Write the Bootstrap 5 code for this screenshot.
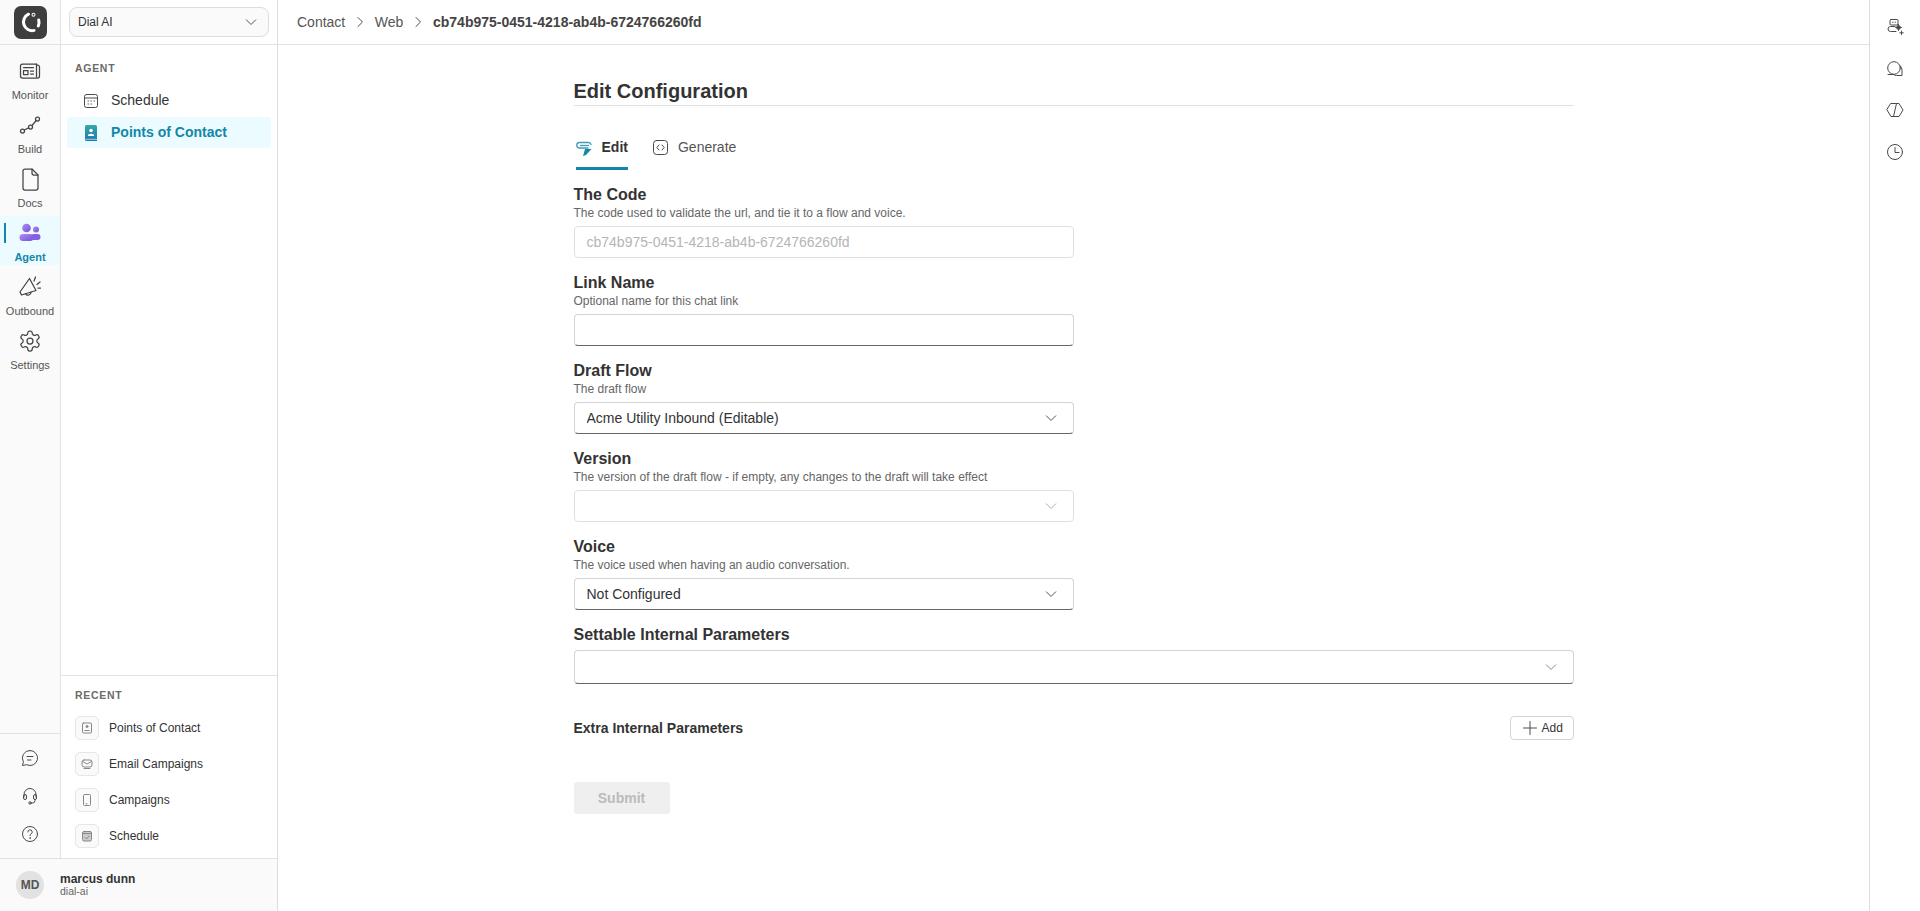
<!DOCTYPE html>
<html lang="en">
<head>
    <meta charset="UTF-8">
    <title>Edit Configuration</title>
    <link href="https://cdn.jsdelivr.net/npm/bootstrap@5.3.3/dist/css/bootstrap.min.css" rel="stylesheet">
    <style>
        body { font-family: "Liberation Sans", Arial, sans-serif; color: #333; background: #fff; height: 911px; overflow: hidden; }
        svg { display: block; flex: none; }
        .ico { fill: none; stroke: #444; stroke-width: 1.25; stroke-linecap: round; stroke-linejoin: round; }
        .ico.thin { stroke-width: 1; stroke: #4a4a4a; }

        .side-shell { width: 278px; border-right: 1px solid #ddd; flex: none; }
        .rail { width: 61px; background: #fafafa; border-right: 1px solid #e2e2e2; flex: none; }
        .logo-cell { height: 45px; border-bottom: 1px solid #e2e2e2; padding: 6px 0 0 14px; }
        .logo-box { width: 33px; height: 33px; background: #3e3e3e; border-radius: 7px; }
        .rail-nav { padding: 9px 0 0; gap: 5px; }
        .rail-item { height: 49px; padding-top: 5px; position: relative; font-size: 11px; line-height: 14px; color: #555; }
        .rail-item .rail-label { margin-top: 5px; }
        .rail-item.on { background: #ecfbff; color: #1287a8; font-weight: 700; }
        .rail-item.on::before { content: ""; position: absolute; left: 4px; top: 7px; width: 2px; height: 20px; background: #1287a8; }
        .rail-help { border-top: 1px solid #e2e2e2; height: 125px; padding-top: 14px; gap: 18px; }

        .panel-top { height: 45px; border-bottom: 1px solid #e2e2e2; padding: 7px 8px 0; }
        .form-select { background-image: url("data:image/svg+xml,%3Csvg xmlns='http://www.w3.org/2000/svg' viewBox='0 0 12 12'%3E%3Cpath d='M1 3.5l5 5 5-5' fill='none' stroke='%23555' stroke-width='1'/%3E%3C/svg%3E"); background-size: 12px 12px; background-position: right 11px center; }
        .org-select { height: 30px; font-size: 12px; line-height: 16px; padding: 6px 24px 6px 8px; background-color: #fafafa; border-color: #ddd; border-radius: 8px; color: #333; }
        .panel-head { font-size: 10.5px; line-height: 14px; font-weight: 700; letter-spacing: .7px; color: #6b6b6b; padding-left: 14px; }
        .panel-head.gap-below { margin-bottom: 10px; }
        .panel-nav { padding: 16px 0 0 0; }
        .panel-link { height: 31px; margin: 0 6px 1px; padding-left: 16px; gap: 12px; font-size: 14px; color: #333; border-radius: 3px; }
        .panel-link.on { background: #ecfbff; color: #1287a8; font-weight: 700; }
        .recent-box { border-top: 1px solid #e2e2e2; padding: 12px 0 10px; }
        .recent-list { margin-top: 14px; gap: 12px; padding-left: 14px; }
        .recent-row { height: 24px; gap: 10px; font-size: 12px; color: #333; }
        .recent-ico { width: 24px; height: 24px; border: 1px solid #e6e6e6; border-radius: 5px; background: #fafafa; }
        .recent-ico .ico { stroke: #888; stroke-width: 1; }

        .user-bar { height: 53px; background: #fafafa; border-top: 1px solid #e2e2e2; padding-left: 16px; gap: 16px; }
        .user-pic { width: 28px; height: 28px; border-radius: 50%; background: #e2e2e2; color: #555; font-size: 12px; font-weight: 700; }
        .user-name { font-size: 12px; line-height: 13px; font-weight: 700; color: #333; }
        .user-org { font-size: 10.5px; line-height: 11px; color: #666; }

        .crumb-bar { height: 45px; border-bottom: 1px solid #e2e2e2; padding-left: 19px; font-size: 14px; color: #555; gap: 7.8px; }
        .crumb-bar b { color: #444; }
        .form-wrap { width: 1000px; margin: 34px auto 0; }
        .page-title { font-size: 20px; line-height: 24px; font-weight: 700; color: #333; padding-bottom: 2px; border-bottom: 1px solid #e2e2e2; margin: 0; }
        .tab-row { margin: 26px 0 14px 2px; gap: 25px; }
        .tab-item { height: 38px; gap: 10px; font-size: 14px; color: #555; padding-bottom: 4px; border-bottom: 3px solid transparent; }
        .tab-item.on { font-weight: 700; color: #333; border-bottom-color: #1287a8; }

        .half-col { width: 500px; }
        .fld { margin-bottom: 14px; }
        .fld-name { display: block; font-size: 16px; line-height: 20px; padding-top: 1px; font-weight: 700; color: #333; margin: 0; }
        .fld-hint { font-size: 12px; line-height: 16px; color: #666; margin: 0 0 5px; }
        .form-control, .form-select.fld-box { height: 32px; font-size: 14px; line-height: 20px; padding: 5px 30px 5px 12px; border: 1px solid #d4d4d4; border-bottom-color: #666; border-radius: 4px; color: #333; background-position: right 16px center; }
        .form-control[readonly] { border-color: #e0e0e0; color: #b5b5b5; background: #fff; }
        .form-select.fld-box.blank { border-color: #e0e0e0; background-image: url("data:image/svg+xml,%3Csvg xmlns='http://www.w3.org/2000/svg' viewBox='0 0 12 12'%3E%3Cpath d='M1 3.5l5 5 5-5' fill='none' stroke='%23aaa' stroke-width='1'/%3E%3C/svg%3E"); }
        .form-select.fld-box.tall { height: 34px; margin-top: 5px; background-image: url("data:image/svg+xml,%3Csvg xmlns='http://www.w3.org/2000/svg' viewBox='0 0 12 12'%3E%3Cpath d='M1 3.5l5 5 5-5' fill='none' stroke='%23888' stroke-width='1'/%3E%3C/svg%3E"); }
        .extra-row { margin-top: 32px; height: 24px; }
        .extra-name { font-size: 14px; font-weight: 700; color: #333; }
        .add-btn { height: 24px; width: 64px; padding: 0 0 0 11px; gap: 4px; font-size: 12px; color: #333; border: 1px solid #d4d4d4; border-radius: 4px; background: #fff; }
        .send-btn { width: 96px; height: 32px; margin-top: 42px; padding: 0; background: #efefef; border: 0; border-radius: 3px; font-size: 14px; font-weight: 700; color: #bbb; }
        .send-btn:disabled { background: #efefef; color: #bbb; opacity: 1; }

        .tool-rail { width: 51px; border-left: 1px solid #ddd; flex: none; padding-top: 18px; gap: 23.7px; }
    </style>
</head>
<body class="d-flex">

<aside class="side-shell d-flex flex-column">
    <div class="d-flex flex-grow-1">
        <div class="rail d-flex flex-column">
            <div class="logo-cell">
                <div class="logo-box d-flex align-items-center justify-content-center">
                    <svg width="25" height="25" viewBox="0 0 25 25" fill="none" stroke="#fff" stroke-width="3" stroke-linecap="round"><path d="M10.500 4.200A8.600 8.600 0 0 0 16 20.400"/><path d="M20.700 10a8.600 8.600 0 0 1-.4 6"/><circle cx="15.500" cy="4.700" r=".5"/></svg>
                </div>
            </div>
            <nav class="rail-nav d-flex flex-column">
                <div class="rail-item d-flex flex-column align-items-center">
                    <svg class="ico" width="24" height="24" viewBox="0 0 24 24"><path d="M18.500 5H4.500A2 2 0 0 0 2.500 7v10a2 2 0 0 0 2 2h15a2 2 0 0 0 2-2V8a2 2 0 0 0-3-1.700"/><path d="M18.500 5v13"/><rect x="5.500" y="11.500" width="4.500" height="4"/><path d="M5.500 8.500h10M12.500 12h3M12.500 15h3"/></svg>
                    <span class="rail-label">Monitor</span>
                </div>
                <div class="rail-item d-flex flex-column align-items-center">
                    <svg class="ico" width="24" height="24" viewBox="0 0 24 24"><circle cx="4.500" cy="18" r="2"/><circle cx="12.500" cy="14" r="2"/><circle cx="19.500" cy="6" r="2"/><path d="M6.300 17l4.400-2.100M14 12.500l4.200-5"/></svg>
                    <span class="rail-label">Build</span>
                </div>
                <div class="rail-item d-flex flex-column align-items-center">
                    <svg class="ico" width="24" height="24" viewBox="0 0 24 24"><path d="M5 4a2 2 0 0 1 2-2h7l6 6v13a2 2 0 0 1-2 2H7a2 2 0 0 1-2-2z"/><path d="M14 2v4a2 2 0 0 0 2 2h4"/></svg>
                    <span class="rail-label">Docs</span>
                </div>
                <div class="rail-item on d-flex flex-column align-items-center">
                    <svg width="24" height="24" viewBox="0 0 24 24"><defs><linearGradient id="agentFill" x1="0" y1="0" x2="1" y2="1"><stop offset="0" stop-color="#b48cf0"/><stop offset="1" stop-color="#7350de"/></linearGradient></defs><circle cx="8.500" cy="7" r="4.300" fill="url(#agentFill)"/><circle cx="18" cy="8.500" r="3" fill="url(#agentFill)"/><rect x="1.500" y="13" width="14" height="7" rx="3.500" fill="url(#agentFill)"/><rect x="13" y="13" width="9.500" height="6" rx="3" fill="#8360e2"/></svg>
                    <span class="rail-label">Agent</span>
                </div>
                <div class="rail-item d-flex flex-column align-items-center">
                    <svg class="ico" width="24" height="24" viewBox="0 0 24 24"><path d="M11.500 3.500L18 15.500 3.500 20 2 17z"/><path d="M7.500 18.800a3 3 0 0 0 5.500-1.800"/><path d="M16 6l1.500-4M19 9.500l3-2.500M20 13h2.500"/></svg>
                    <span class="rail-label">Outbound</span>
                </div>
                <div class="rail-item d-flex flex-column align-items-center">
                    <svg class="ico" width="24" height="24" viewBox="0 0 24 24"><path d="M12.220 2h-.44a2 2 0 0 0-2 2v.18a2 2 0 0 1-1 1.730l-.43.25a2 2 0 0 1-2 0l-.15-.08a2 2 0 0 0-2.730.73l-.22.38a2 2 0 0 0 .73 2.730l.15.1a2 2 0 0 1 1 1.720v.51a2 2 0 0 1-1 1.740l-.15.09a2 2 0 0 0-.73 2.730l.22.38a2 2 0 0 0 2.730.73l.15-.08a2 2 0 0 1 2 0l.43.25a2 2 0 0 1 1 1.730V20a2 2 0 0 0 2 2h.44a2 2 0 0 0 2-2v-.18a2 2 0 0 1 1-1.730l.43-.25a2 2 0 0 1 2 0l.15.08a2 2 0 0 0 2.730-.73l.22-.39a2 2 0 0 0-.73-2.730l-.15-.08a2 2 0 0 1-1-1.740v-.5a2 2 0 0 1 1-1.740l.15-.09a2 2 0 0 0 .73-2.730l-.22-.38a2 2 0 0 0-2.730-.73l-.15.08a2 2 0 0 1-2 0l-.43-.25a2 2 0 0 1-1-1.730V4a2 2 0 0 0-2-2z"/><circle cx="12" cy="12" r="3"/></svg>
                    <span class="rail-label">Settings</span>
                </div>
            </nav>
            <div class="rail-help mt-auto d-flex flex-column align-items-center">
                <svg class="ico thin" width="20" height="20" viewBox="0 0 20 20"><path d="M10 2.500a7.500 7.500 0 1 1-3.300 14.200L2.500 17.500l.9-3.700A7.500 7.500 0 0 1 10 2.500z"/><path d="M7 8.500h6M7.500 12h3.500"/></svg>
                <svg class="ico thin" width="20" height="20" viewBox="0 0 20 20"><path d="M4 11V8.500a6 6 0 0 1 12 0V11"/><rect x="3.500" y="8.500" width="3" height="5" rx="1.500"/><rect x="13.500" y="8.500" width="3" height="5" rx="1.500"/><path d="M15 13.500v1a2.500 2.500 0 0 1-2.500 2.500H11"/><circle cx="10" cy="17" r="1.200"/></svg>
                <svg class="ico thin" width="20" height="20" viewBox="0 0 20 20"><circle cx="10" cy="10" r="7.500"/><path d="M7.800 8a2.200 2.200 0 1 1 3.300 1.900c-.7.400-1.100.9-1.100 1.700"/><circle cx="10" cy="14" r=".3"/></svg>
            </div>
        </div>

        <div class="d-flex flex-column flex-grow-1">
            <div class="panel-top">
                <select class="form-select org-select"><option>Dial AI</option></select>
            </div>
            <div class="panel-nav">
                <div class="panel-head gap-below">AGENT</div>
                <div class="panel-link d-flex align-items-center">
                    <svg class="ico thin" width="16" height="16" viewBox="0 0 16 16"><rect x="1.500" y="1.500" width="13" height="13" rx="2"/><path d="M1.500 5h13M5 8h.5M8 8h.5M11 8h.5M5 11h.5M8 11h.5"/></svg>
                    <span>Schedule</span>
                </div>
                <div class="panel-link on d-flex align-items-center">
                    <svg width="16" height="18" viewBox="0 0 16 18"><defs><linearGradient id="bookFill" x1="0" y1="0" x2="0" y2="1"><stop offset="0" stop-color="#35a9a0"/><stop offset="1" stop-color="#1a78b8"/></linearGradient></defs><path d="M2 2.500A1.500 1.500 0 0 1 3.500 1h9A1.500 1.500 0 0 1 14 2.500V17H3.500A1.500 1.500 0 0 1 2 15.500z" fill="url(#bookFill)"/><circle cx="8" cy="6.500" r="1.800" fill="#fff"/><path d="M4.800 12a3.200 2.200 0 0 1 6.400 0z" fill="#fff"/><path d="M2.500 15.300h11.500" stroke="#bfe3ee" stroke-width=".8"/></svg>
                    <span>Points of Contact</span>
                </div>
            </div>
            <div class="recent-box mt-auto">
                <div class="panel-head">RECENT</div>
                <div class="recent-list d-flex flex-column">
                    <div class="recent-row d-flex align-items-center">
                        <div class="recent-ico d-flex align-items-center justify-content-center"><svg class="ico" width="12" height="12" viewBox="0 0 12 12"><rect x="1.500" y="1" width="9" height="10" rx="1"/><circle cx="6" cy="4.500" r="1" fill="#888"/><path d="M3.800 8.500h4.400"/></svg></div>
                        <span>Points of Contact</span>
                    </div>
                    <div class="recent-row d-flex align-items-center">
                        <div class="recent-ico d-flex align-items-center justify-content-center"><svg class="ico" width="12" height="12" viewBox="0 0 12 12"><rect x="1" y="2" width="10" height="7" rx="2"/><path d="M1.500 3.500L6 6l4.500-2.500M3 10.500h6"/></svg></div>
                        <span>Email Campaigns</span>
                    </div>
                    <div class="recent-row d-flex align-items-center">
                        <div class="recent-ico d-flex align-items-center justify-content-center"><svg class="ico" width="12" height="12" viewBox="0 0 12 12"><rect x="2.500" y=".5" width="7" height="11" rx="1"/><path d="M5 9.800h1"/></svg></div>
                        <span>Campaigns</span>
                    </div>
                    <div class="recent-row d-flex align-items-center">
                        <div class="recent-ico d-flex align-items-center justify-content-center"><svg class="ico" width="12" height="12" viewBox="0 0 12 12"><rect x="1.500" y="1.500" width="9" height="9.500" rx="1.500" fill="#ccc"/><path d="M1.500 3.500h9M4 7.500l1.500 1.500L8 6"/></svg></div>
                        <span>Schedule</span>
                    </div>
                </div>
            </div>
        </div>
    </div>

    <div class="user-bar d-flex align-items-center">
        <div class="user-pic d-flex align-items-center justify-content-center">MD</div>
        <div>
            <div class="user-name">marcus dunn</div>
            <div class="user-org">dial-ai</div>
        </div>
    </div>
</aside>

<main class="flex-grow-1 d-flex flex-column">
    <div class="crumb-bar d-flex align-items-center">
        <span>Contact</span>
        <svg class="ico thin" width="14" height="14" viewBox="0 0 14 14"><path d="M5 2.500L9.500 7 5 11.500"/></svg>
        <span>Web</span>
        <svg class="ico thin" width="14" height="14" viewBox="0 0 14 14"><path d="M5 2.500L9.500 7 5 11.500"/></svg>
        <b>cb74b975-0451-4218-ab4b-6724766260fd</b>
    </div>

    <div class="form-wrap">
        <h1 class="page-title">Edit Configuration</h1>

        <div class="tab-row d-flex">
            <div class="tab-item on d-flex align-items-center">
                <svg width="16" height="16" viewBox="0 0 16 16" fill="none"><path d="M12 8H3.500a2.500 2.500 0 0 1 0-5.500h9a2.500 2.500 0 0 1 2.500 2" stroke="#3f9cb8" stroke-width="1.300" stroke-linecap="round"/><path d="M4 5.500h9" stroke="#3f9cb8" stroke-width="1.300"/><path d="M9 9h6.500L10 15l-3 1z" fill="#1287a8"/></svg>
                <span>Edit</span>
            </div>
            <div class="tab-item d-flex align-items-center">
                <svg class="ico thin" width="15" height="15" viewBox="0 0 15 15"><rect x=".5" y=".5" width="14" height="14" rx="3"/><path d="M6 5L3.800 7.500 6 10M9 5l2.200 2.500L9 10"/></svg>
                <span>Generate</span>
            </div>
        </div>

        <div class="half-col">
            <div class="fld">
                <label class="fld-name">The Code</label>
                <div class="fld-hint">The code used to validate the url, and tie it to a flow and voice.</div>
                <input type="text" class="form-control" readonly value="cb74b975-0451-4218-ab4b-6724766260fd">
            </div>
            <div class="fld">
                <label class="fld-name">Link Name</label>
                <div class="fld-hint">Optional name for this chat link</div>
                <input type="text" class="form-control">
            </div>
            <div class="fld">
                <label class="fld-name">Draft Flow</label>
                <div class="fld-hint">The draft flow</div>
                <select class="form-select fld-box"><option>Acme Utility Inbound (Editable)</option></select>
            </div>
            <div class="fld">
                <label class="fld-name">Version</label>
                <div class="fld-hint">The version of the draft flow - if empty, any changes to the draft will take effect</div>
                <select class="form-select fld-box blank"><option></option></select>
            </div>
            <div class="fld">
                <label class="fld-name">Voice</label>
                <div class="fld-hint">The voice used when having an audio conversation.</div>
                <select class="form-select fld-box"><option>Not Configured</option></select>
            </div>
        </div>

        <label class="fld-name">Settable Internal Parameters</label>
        <select class="form-select fld-box tall"><option></option></select>

        <div class="extra-row d-flex align-items-center justify-content-between">
            <span class="extra-name">Extra Internal Parameters</span>
            <button type="button" class="btn add-btn d-flex align-items-center">
                <svg class="ico thin" width="16" height="16" viewBox="0 0 16 16"><path d="M8 1.500v13M1.500 8h13"/></svg>
                <span>Add</span>
            </button>
        </div>

        <button type="button" class="btn send-btn" disabled>Submit</button>
    </div>
</main>

<aside class="tool-rail d-flex flex-column align-items-center">
    <svg class="ico thin" width="18" height="18" viewBox="0 0 18 18"><rect x="4" y="1.500" width="8" height="5.500" rx="1"/><path d="M6.500 4.200h.5M9 4.200h.5"/><path d="M9 8.500H4.500a2.500 2.500 0 0 0 0 5H10"/><path d="M12.500 6.500l1 2 2 1-2 1-1 2-1-2-2-1 2-1z" fill="#444"/><path d="M15.500 13v3.500M13.800 14.800h3.500"/></svg>
    <svg class="ico thin" width="18" height="18" viewBox="0 0 18 18"><circle cx="8" cy="8" r="6.300"/><path d="M14 5.500a6 6 0 0 1 2 4.500v5.500h-5.500a6 6 0 0 1-3-1M2 14.500h5"/></svg>
    <svg class="ico thin" width="18" height="18" viewBox="0 0 18 18"><path d="M5 2.500h8L17 9l-4 6.500H5L1 9z"/><path d="M10.500 2.500l-3 13"/></svg>
    <svg class="ico thin" width="18" height="18" viewBox="0 0 18 18"><circle cx="9" cy="9" r="7.500"/><path d="M9 4.500V9.500h4"/></svg>
</aside>

</body>
</html>
